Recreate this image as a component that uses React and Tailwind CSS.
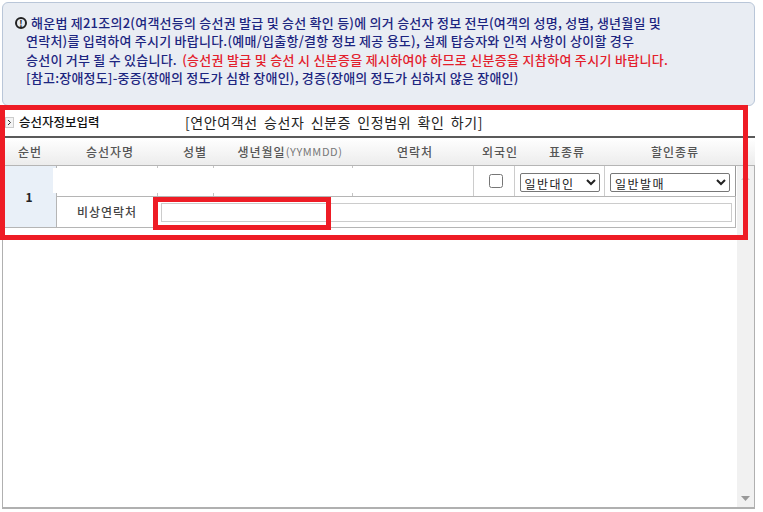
const font = { fontFamily: '"Noto Sans CJK KR", "Noto Sans", sans-serif' };

const columns = [
  { label: "승선자명", width: "w-[100px]" },
  { label: "성별", width: "w-[70px]" },
  { label: "생년월일", width: "w-[120px]" },
  { label: "연락처", width: "w-[130px]" },
  { label: "외국인", width: "w-[40px]" },
  { label: "표종류", width: "w-[94px]" },
  { label: "할인종류", width: "w-[122px]" },
];

function Notice() {
  return (
    <div className="ml-[2px] mt-[2px] h-[104px] w-[753px] rounded-md border border-[#b9c6d8] bg-[#e9edf3] pl-[12px] pt-[11px] text-[13px] font-medium leading-[18.3px] tracking-[0.24px] text-[#1c2580]">
      <div className="flex items-center whitespace-nowrap">
        <span className="mr-[4px] flex h-[12px] w-[12px] items-center justify-center rounded-full border-2 border-[#222] text-[9px] font-bold leading-none text-[#222]">
          !
        </span>
        <span>
          해운법 제21조의2(여객선등의 승선권 발급 및 승선 확인 등)에 의거 승선자 정보 전부(여객의 성명, 성별, 생년월일 및
        </span>
      </div>
      <div className="ml-[11px] whitespace-nowrap">
        연락처)를 입력하여 주시기 바랍니다.(예매/입출항/결항 정보 제공 용도), 실제 탑승자와 인적 사항이 상이할 경우
      </div>
      <div className="ml-[11px] whitespace-nowrap">
        승선이 거부 될 수 있습니다.{" "}
        <span className="ml-[2px] tracking-[0.3px] text-[#e3202c]">
          (승선권 발급 및 승선 시 신분증을 제시하여야 하므로 신분증을 지참하여 주시기 바랍니다.
        </span>
      </div>
      <div className="ml-[11px] whitespace-nowrap tracking-[0.2px]">
        [참고:장애정도]-중증(장애의 정도가 심한 장애인), 경증(장애의 정도가 심하지 않은 장애인)
      </div>
    </div>
  );
}

function TitleBar() {
  return (
    <div className="flex h-[30px] items-center pl-[5px] pt-[2px]">
      <span className="flex h-[11px] w-[9px] items-center justify-center border border-[#ccc] bg-[#f4f4f4]">
        <svg width="5" height="7" viewBox="0 0 5 7" fill="none" stroke="#333" strokeWidth="1">
          <path d="M1 1l2.5 2.5L1 6" />
        </svg>
      </span>
      <span className="ml-[5px] w-[166px] text-[12.5px] font-medium text-[#111]">승선자정보입력</span>
      <span className="text-[14px] tracking-[0.6px] [word-spacing:2.5px] text-[#222]">
        [연안여객선 승선자 신분증 인정범위 확인 하기]
      </span>
    </div>
  );
}

function HeaderRow() {
  return (
    <div className="flex h-[30px] border-b border-b-[#b5b5b5] border-t-2 border-t-[#5a5a5a] bg-gradient-to-b from-white to-[#ececec] text-[12px] font-medium tracking-[1px] text-[#555]">
      <div className="flex w-[60px] shrink-0 items-center justify-center">순번</div>
      {columns.map((col) => (
        <div key={col.label} className={`flex shrink-0 items-center justify-center ${col.width}`}>
          {col.label}
          {col.label === "생년월일" && (
            <span className="text-[11px] font-normal tracking-[0.6px] text-[#777]">(YYMMDD)</span>
          )}
        </div>
      ))}
    </div>
  );
}

// white input sitting over the cell, only the tips of the separator stay visible
function BlankCell({ width, first }) {
  return (
    <div className={`shrink-0 border-r border-[#c4c4c4] ${width} ${first ? "-ml-[4px]" : ""}`}>
      <div className="-mr-px mt-[2px] h-[25px] bg-white" />
    </div>
  );
}

function PassengerRows() {
  return (
    <div className="flex h-[62px] w-[736px]">
      <div className="flex w-[57px] shrink-0 items-center justify-center border-b border-r border-[#b5b5b5] bg-[#e9f0f8] pl-[2px] text-[12px] font-bold text-[#222]">
        1
      </div>
      <div className="flex-1">
        <div className="flex h-[31px] border-b border-[#b5b5b5]">
          <BlankCell width="w-[105px]" first />
          <BlankCell width="w-[56px]" />
          <BlankCell width="w-[139px]" />
          <div className="w-[121px] shrink-0 border-r border-[#ccc] bg-white" />
          <div className="flex w-[41px] shrink-0 items-center justify-center border-r border-[#ccc] pl-[3px]">
            <input type="checkbox" className="h-[14px] w-[14px]" />
          </div>
          <div className="flex w-[90px] shrink-0 items-center justify-center border-r border-[#ccc] pt-[3px]">
            <select style={font} className="h-[19px] w-[80px] rounded-[2px] border border-[#777] bg-white text-[12px] tracking-[1.5px] text-[#222]">
              <option>일반대인</option>
            </select>
          </div>
          <div className="flex flex-1 items-center justify-center border-r border-[#999] pt-[3px]">
            <select style={font} className="h-[19px] w-[120px] rounded-[2px] border border-[#777] bg-white text-[12px] tracking-[1.5px] text-[#222]">
              <option>일반발매</option>
            </select>
          </div>
        </div>
        <div className="flex h-[31px] border-b border-r border-[#b5b5b5]">
          <div className="flex w-[101px] shrink-0 items-center justify-center border-r border-[#ccc] text-[12px] font-medium tracking-[1px] text-[#444]">
            비상연락처
          </div>
          <div className="flex flex-1 items-center px-[3px]">
            <input type="text" className="h-[19px] w-full border border-[#ccc] bg-white" />
          </div>
        </div>
      </div>
    </div>
  );
}

export default function App() {
  return (
    <div style={font} className="relative h-[512px] w-[763px] overflow-hidden bg-white">
      <Notice />
      <TitleBar />
      <div className="relative ml-[2px] flex h-[373px] w-[753px] flex-col border-b-2 border-l border-r border-[#b0b0b0] border-t-0">
        <div className="-ml-[3px] w-[755px]">
          <HeaderRow />
        </div>
        <div className="-ml-[3px]">
          <PassengerRows />
        </div>
        {/* scrollbar */}
        <div className="absolute bottom-0 right-0 top-[30px] flex w-[17px] flex-col items-center justify-between bg-[#f1f1f1] pb-[6px] pt-[9px]">
          <svg width="9" height="5" viewBox="0 0 9 5" fill="#ccc">
            <path d="M4.5 0L9 5H0z" />
          </svg>
          <svg width="9" height="5" viewBox="0 0 9 5" fill="#999">
            <path d="M0 0h9L4.5 5z" />
          </svg>
        </div>
      </div>

      {/* red annotation boxes */}
      <div className="absolute left-0 top-[105px] h-[135px] w-[748px] border-[5px] border-[#ee1c25]" />
      <div className="absolute left-[153px] top-[197px] h-[33px] w-[178px] border-[5px] border-[#ee1c25]" />
    </div>
  );
}
